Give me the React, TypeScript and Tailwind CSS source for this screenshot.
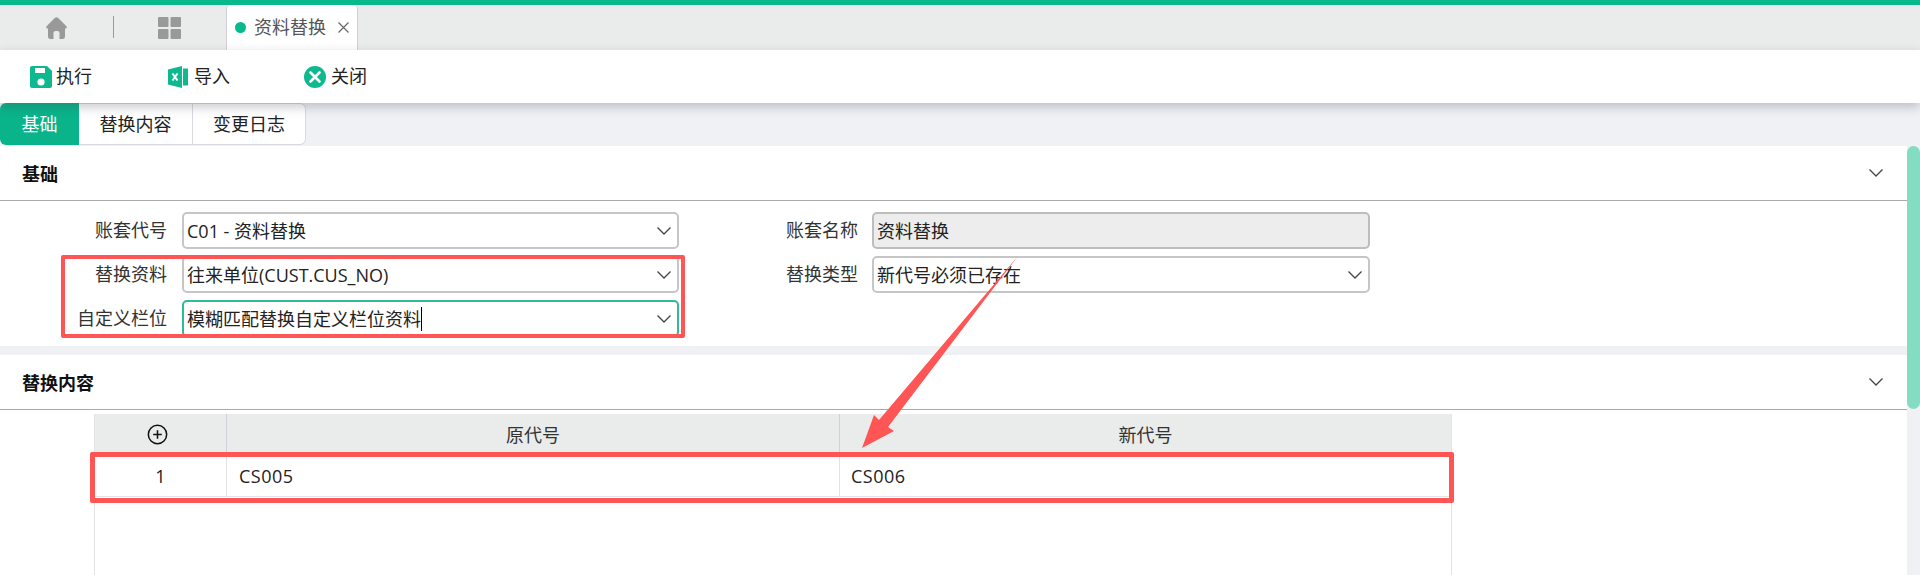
const font = { fontFamily: '"Open Sans", "Noto Sans CJK SC", sans-serif' }

function Chevron({ className = '' }: { className?: string }) {
  return (
    <svg viewBox="0 0 14 8" className={`w-[14px] h-[8px] ${className}`} fill="none" stroke="#444" strokeWidth="1.3">
      <polyline points="0.5,0.5 7,7 13.5,0.5" />
    </svg>
  )
}

function Field({ value, focused, readOnly, caret, noArrow, wide }: { value: string; focused?: boolean; readOnly?: boolean; caret?: boolean; noArrow?: boolean; wide?: boolean }) {
  const look = focused
    ? 'border-[#2fbb97] bg-white'
    : readOnly
      ? 'border-[#bdbdbd] bg-[#ecedec]'
      : 'border-[#c6c6c6] bg-white'
  return (
    <div className={`${wide ? 'w-[498px]' : 'w-[497px]'} h-[37px] shrink-0 flex items-center justify-between pl-[3px] pr-[6px] border-2 rounded-[5px] ${look}`}>
      <span className="text-[18px] leading-none text-[#222] flex items-center">
        {value}
        {caret && <span className="inline-block w-px h-[24px] bg-black" />}
      </span>
      {!noArrow && <Chevron />}
    </div>
  )
}

function Label({ text, className }: { text: string; className: string }) {
  return <div className={`${className} shrink-0 text-right text-[18px] text-[#333]`}>{text}</div>
}

function SectionHead({ title }: { title: string }) {
  return (
    <div className="h-[55px] flex items-center justify-between pl-[22px] pr-[24px] border-b border-[#aaaaaa]">
      <span className="pt-[2px] text-[18px] font-bold text-[#111]">{title}</span>
      <Chevron />
    </div>
  )
}

export default function App() {
  return (
    <div style={font} className="relative w-[1920px] h-[575px] overflow-hidden bg-white flex flex-col">
      <div className="h-[5px] shrink-0 bg-[#08b98c]" />

      {/* Tab strip */}
      <div className="h-[45px] shrink-0 bg-[#e9eceb] flex items-stretch">
        <div className="w-[113px] flex items-center pl-[46px]">
          <svg viewBox="0 0 21 22" className="w-[21px] h-[22px]" fill="#999999">
            <path d="M8.8 1 C9.8 0 11.2 0 12.2 1 L20.2 9 C21.3 10.1 20.8 11.6 19.4 11.6 L19 11.6 L19 19.5 C19 21.2 18 22 16.5 22 L13.5 22 L13.5 16 C13.5 14.7 12.8 14 11.5 14 L9.5 14 C8.2 14 7.5 14.7 7.5 16 L7.5 22 L4.5 22 C3 22 2 21.2 2 19.5 L2 11.6 L1.6 11.6 C0.2 11.6 -0.3 10.1 0.8 9 Z" />
          </svg>
        </div>
        <div className="w-px h-[22px] mt-[11px] bg-[#999999]" />
        <div className="w-[112px] flex items-center pl-[44px]">
          <svg viewBox="0 0 23 22" className="w-[23px] h-[22px]" fill="#999999">
            <rect x="0" y="0" width="10.5" height="10" rx="1" />
            <rect x="12.5" y="0" width="10.5" height="10" rx="1" />
            <rect x="0" y="12" width="10.5" height="10" rx="1" />
            <rect x="12.5" y="12" width="10.5" height="10" rx="1" />
          </svg>
        </div>
        <div className="w-[132px] bg-white rounded-t-[4px] border-x border-[#d0d0d4] flex items-center pl-[8px]">
          <span className="w-[11px] h-[11px] rounded-full bg-[#08b98c]" />
          <span className="ml-[8px] text-[18px] text-[#555]">资料替换</span>
          <svg viewBox="0 0 11 11" className="w-[11px] h-[11px] ml-[12px]" fill="none" stroke="#666" strokeWidth="1.2">
            <path d="M0.5 0.5 L10.5 10.5 M10.5 0.5 L0.5 10.5" />
          </svg>
        </div>
      </div>

      {/* Toolbar */}
      <div className="relative z-10 h-[53px] shrink-0 bg-white flex items-center pl-[30px] shadow-[0_4px_10px_rgba(60,60,80,0.28)]">
        <div className="flex items-center gap-[4px]">
          <svg viewBox="0 0 22 22" className="w-[22px] h-[22px]">
            <path d="M2 0 L17 0 L22 5 L22 20 C22 21.2 21.2 22 20 22 L2 22 C0.8 22 0 21.2 0 20 L0 2 C0 0.8 0.8 0 2 0 Z" fill="#0fb98f" />
            <rect x="5" y="2" width="10" height="5" fill="#fff" />
            <circle cx="11" cy="16" r="3.6" fill="#fff" />
          </svg>
          <span className="text-[18px] text-[#222]">执行</span>
        </div>
        <div className="flex items-center gap-[6px] ml-[76px]">
          <svg viewBox="0 0 20 22" className="w-[20px] h-[22px]">
            <path d="M0 3.5 L14 0 L14 22 L0 18.5 Z" fill="#0fb98f" />
            <path d="M15 2.5 L20 2.5 L20 19.5 L15 19.5 Z" fill="#0fb98f" />
            <path d="M4.5 7.5 L9.5 14.5 M9.5 7.5 L4.5 14.5" stroke="#fff" strokeWidth="2" fill="none" />
          </svg>
          <span className="text-[18px] text-[#222]">导入</span>
        </div>
        <div className="flex items-center gap-[5px] ml-[74px]">
          <svg viewBox="0 0 22 22" className="w-[22px] h-[22px]">
            <circle cx="11" cy="11" r="11" fill="#0fb98f" />
            <path d="M6.5 6.5 L15.5 15.5 M15.5 6.5 L6.5 15.5" stroke="#fff" strokeWidth="2.6" strokeLinecap="round" fill="none" />
          </svg>
          <span className="text-[18px] text-[#222]">关闭</span>
        </div>
      </div>

      {/* Sub tabs */}
      <div className="h-[43px] shrink-0 bg-[#eff1f5] flex items-start">
        <div className="w-[79px] h-[42px] bg-[#0ab48a] rounded-l-[6px] flex items-center justify-center text-[18px] text-white">基础</div>
        <div className="w-[114px] h-[42px] bg-white border-y border-r border-[#d8dae2] flex items-center justify-center text-[18px] text-[#222]">替换内容</div>
        <div className="w-[113px] h-[42px] bg-white border-y border-r border-[#d8dae2] rounded-r-[6px] flex items-center justify-center text-[18px] text-[#222]">变更日志</div>
      </div>

      <div className="flex-1 min-h-0 flex">
        <div className="flex-1 min-w-0 flex flex-col bg-[#eff1f5]">
          {/* Section: basics */}
          <section className="h-[200px] shrink-0 bg-white">
            <SectionHead title="基础" />
            <div className="pt-[11px] flex flex-col gap-[7px]">
              <div className="flex items-center">
                <Label text="账套代号" className="w-[182px] pr-[15px]" />
                <Field value="C01 - 资料替换" />
                <Label text="账套名称" className="w-[193px] pr-[14px]" />
                <Field value="资料替换" readOnly noArrow wide />
              </div>
              <div className="flex items-center">
                <Label text="替换资料" className="w-[182px] pr-[15px]" />
                <Field value="往来单位(CUST.CUS_NO)" />
                <Label text="替换类型" className="w-[193px] pr-[14px]" />
                <Field value="新代号必须已存在" wide />
              </div>
              <div className="flex items-center">
                <Label text="自定义栏位" className="w-[182px] pr-[15px]" />
                <Field value="模糊匹配替换自定义栏位资料" focused caret />
              </div>
            </div>
          </section>

          {/* Section: replace content */}
          <section className="mt-[9px] flex-1 bg-white">
            <SectionHead title="替换内容" />
            <div className="ml-[94px] mt-[4px] w-[1358px] h-[170px] border-x border-[#e2e3e6]">
              <div className="h-[41px] bg-[#e9eceb] grid grid-cols-[132px_613px_1fr] text-[18px] text-[#333]">
                <div className="flex items-center justify-center pr-[6px] border-r border-[#cfd2de]">
                  <svg viewBox="0 0 22 22" className="w-[21px] h-[21px]" fill="none" stroke="#111" strokeWidth="1.6">
                    <circle cx="11" cy="11" r="9.6" />
                    <path d="M11 6.5 L11 15.5 M6.5 11 L15.5 11" />
                  </svg>
                </div>
                <div className="flex items-center justify-center pt-[2px] border-r border-[#cfd2de]">原代号</div>
                <div className="flex items-center justify-center pt-[2px]">新代号</div>
              </div>
              <div className="h-[42px] grid grid-cols-[132px_613px_1fr] text-[18px] text-[#222] border-b border-[#e2e3e6]">
                <div className="flex items-center justify-center pt-[2px] border-r border-[#e2e3e6]">1</div>
                <div className="flex items-center pl-[12px] pt-[2px] tracking-[0.5px] border-r border-[#e2e3e6]">CS005</div>
                <div className="flex items-center pl-[11px] pt-[2px] tracking-[0.5px]">CS006</div>
              </div>
            </div>
          </section>
        </div>

        {/* Scrollbar */}
        <div className="w-[13px] shrink-0 bg-[#f0f1f5]">
          <div className="h-[263px] rounded-full bg-[#84dcc2]" />
        </div>
      </div>

      {/* Red annotations drawn over the page */}
      <div className="absolute left-[61px] top-[255px] w-[624px] h-[83px] border-4 border-[#ff5555] rounded-[2px]" />
      <div className="absolute left-[90px] top-[452px] w-[1364px] h-[51px] border-[5px] border-[#ff5555] rounded-[2px]" />
      <svg className="absolute left-0 top-0 w-[1920px] h-[575px] pointer-events-none" viewBox="0 0 1920 575">
        <polygon points="1018,256 888,427 894,431 862,448 874,415 879,420" fill="#ff5555" />
      </svg>
    </div>
  )
}
